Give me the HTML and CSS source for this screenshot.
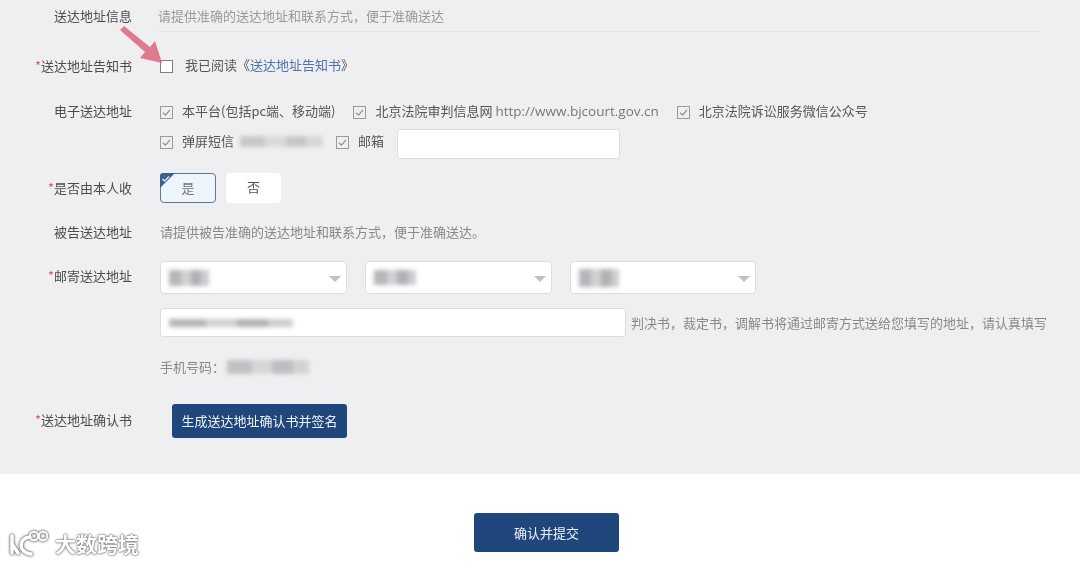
FILE: index.html
```html
<!DOCTYPE html>
<html lang="zh-CN">
<head>
<meta charset="utf-8">
<title>送达地址信息</title>
<link rel="stylesheet" href="styles.css">
</head>
<body>
<main class="panel">
  <section class="row row-head">
    <div class="label">送达地址信息</div>
    <div class="head-hint">请提供准确的送达地址和联系方式，便于准确送达</div>
  </section>

  <section class="row row-notice">
    <div class="label"><span class="req">*</span>送达地址告知书</div>
    <div class="line">
      <span class="box"></span>
      <span class="notice-text">我已阅读《<a class="link">送达地址告知书</a>》</span>
    </div>
  </section>

  <section class="row row-electronic">
    <div class="label">电子送达地址</div>
    <div class="stack">
      <div class="line line-a">
        <span class="opt"><svg class="check" viewBox="0 0 13 13"><rect x=".5" y=".5" width="12" height="12" fill="none" stroke="#9a9a9e"/><path d="M3 6.6l2.5 2.6L10 3.8" fill="none" stroke="#8a8a8e" stroke-width="1.1"/></svg>本平台(包括pc端、移动端)</span>
        <span class="opt"><svg class="check" viewBox="0 0 13 13"><rect x=".5" y=".5" width="12" height="12" fill="none" stroke="#9a9a9e"/><path d="M3 6.6l2.5 2.6L10 3.8" fill="none" stroke="#8a8a8e" stroke-width="1.1"/></svg>北京法院审判信息网 <span class="url">http://www.bjcourt.gov.cn</span></span>
        <span class="opt"><svg class="check" viewBox="0 0 13 13"><rect x=".5" y=".5" width="12" height="12" fill="none" stroke="#9a9a9e"/><path d="M3 6.6l2.5 2.6L10 3.8" fill="none" stroke="#8a8a8e" stroke-width="1.1"/></svg>北京法院诉讼服务微信公众号</span>
      </div>
      <div class="line line-b">
        <span class="opt"><svg class="check" viewBox="0 0 13 13"><rect x=".5" y=".5" width="12" height="12" fill="none" stroke="#9a9a9e"/><path d="M3 6.6l2.5 2.6L10 3.8" fill="none" stroke="#8a8a8e" stroke-width="1.1"/></svg>弹屏短信<span class="smear smear-sms"></span></span>
        <span class="opt opt-mail"><svg class="check" viewBox="0 0 13 13"><rect x=".5" y=".5" width="12" height="12" fill="none" stroke="#9a9a9e"/><path d="M3 6.6l2.5 2.6L10 3.8" fill="none" stroke="#8a8a8e" stroke-width="1.1"/></svg>邮箱</span>
        <span class="field field-mail"></span>
      </div>
    </div>
  </section>

  <section class="row row-self">
    <div class="label"><span class="req">*</span>是否由本人收</div>
    <div class="toggles">
      <span class="toggle toggle-on">
        <svg class="corner" viewBox="0 0 18 18"><path d="M0 3a3 3 0 0 1 3-3h12L0 15z" fill="#3c6092"/><path d="M2.5 6l2.2 2L9 3.6" fill="none" stroke="#dfe8f3" stroke-width="1.4"/></svg>
        是
      </span>
      <span class="toggle toggle-off">否</span>
    </div>
  </section>

  <section class="row row-defendant">
    <div class="label">被告送达地址</div>
    <div class="hint">请提供被告准确的送达地址和联系方式，便于准确送达。</div>
  </section>

  <section class="row row-mail">
    <div class="label"><span class="req">*</span>邮寄送达地址</div>
    <div class="stack">
      <div class="selects">
        <span class="select"><span class="smear smear-s1"></span><i class="caret"></i></span>
        <span class="select"><span class="smear smear-s2"></span><i class="caret"></i></span>
        <span class="select"><span class="smear smear-s3"></span><i class="caret"></i></span>
      </div>
      <div class="address">
        <span class="field field-address"><span class="smear smear-addr"></span></span>
        <span class="address-hint">判决书，裁定书，调解书将通过邮寄方式送给您填写的地址，请认真填写</span>
      </div>
      <div class="phone">手机号码：<span class="smear smear-phone"></span></div>
    </div>
  </section>

  <section class="row row-confirm">
    <div class="label"><span class="req">*</span>送达地址确认书</div>
    <button class="btn btn-make" type="button">生成送达地址确认书并签名</button>
  </section>

  <svg class="arrow" viewBox="0 0 50 44"><path d="M2 5L6 1L32 22L37 16L44 38L22 33L27 27z" fill="#d9657c" opacity=".85"/></svg>
</main>

<footer class="foot">
  <button class="btn btn-submit" type="button">确认并提交</button>
  <div class="mark">
    <svg class="mark-logo" viewBox="0 0 40 28"><g fill="none" stroke="#fff" stroke-width="3.4" stroke-linecap="round"><path d="M3 7v17"/><path d="M3 15L9 24"/><path d="M21 8C9 9 9 24 22 25"/></g><g fill="none" stroke="#fff" stroke-width="2"><circle cx="25" cy="7" r="4.2"/><circle cx="34" cy="7" r="4.2"/></g></svg>
    <span class="mark-text">大数跨境</span>
  </div>
</footer>
</body>
</html>
```

FILE: styles.css
```css
* { box-sizing: border-box; }
html, body { margin: 0; padding: 0; }
body {
  width: 1080px;
  height: 563px;
  overflow: hidden;
  background: #fff;
  color: #55555a;
  font: 13px/20px "Noto Sans CJK SC", "Noto Sans", sans-serif;
}
.panel, .foot { filter: blur(.35px); }
.panel {
  position: relative;
  height: 474px;
  background: #efeff2;
}
.row { display: flex; }
.label {
  flex: none;
  width: 132px;
  margin-right: 28px;
  text-align: right;
  color: #4c4c50;
}
.req { color: #d9566c; }
.line { display: flex; align-items: center; }
.stack { display: flex; flex-direction: column; }

.row-head { height: 32px; }
.row-head .label { line-height: 32px; }
.head-hint {
  flex: none;
  width: 882px;
  margin-left: -2px;
  height: 32px;
  line-height: 32px;
  color: #99999d;
  border-bottom: 1px solid #e6e6ea;
}

.row-notice { margin-top: 24px; height: 20px; }
.box {
  width: 13px;
  height: 13px;
  border: 1px solid #808084;
  background: #fff;
  margin-top: 1px;
}
.notice-text { margin-left: 12px; margin-top: -2px; }
.link { color: #4e74a8; }

.row-electronic { margin-top: 21px; }
.row-electronic .label { line-height: 28px; }
.line-a { height: 28px; gap: 18px; }
.line-b { height: 30px; margin-top: 4px; }
.line-b .opt { margin-bottom: 6px; }
.opt { display: inline-flex; align-items: center; white-space: pre; }
.check { flex: none; width: 13px; height: 13px; margin-right: 9px; margin-top: 2px; }
.url { color: #77777b; font-family: "Open Sans", sans-serif; font-size: 13.5px; }
.opt-mail { margin-left: 13px; }
.field {
  display: block;
  background: #fff;
  border: 1px solid #dcdce0;
  border-radius: 3px;
}
.field-mail { width: 223px; height: 30px; margin-left: 13px; }

.smear {
  display: inline-block;
  background:
    linear-gradient(90deg, #a9a9ae 0 30%, #c9c9cd 30% 55%, #a4a4a9 55% 80%, #c4c4c8 80% 100%);
  filter: blur(2px);
  opacity: .85;
}
.smear-sms { width: 83px; height: 11px; margin-left: 6px; opacity: .55; }

.row-self { margin-top: 14px; }
.row-self .label { line-height: 30px; }
.toggles { display: flex; gap: 10px; }
.toggle {
  position: relative;
  height: 30px;
  width: 56px;
  line-height: 28px;
  text-align: center;
  border-radius: 4px;
}
.toggle-on { background: #eef6fb; border: 1px solid #5b7895; color: #74747a; }
.toggle-off { background: #fff; width: 55px; color: #55555a; }
.corner { position: absolute; left: -1px; top: -1px; width: 18px; height: 18px; }

.row-defendant { margin-top: 15px; height: 28px; }
.row-defendant .label { line-height: 28px; }
.hint { line-height: 28px; color: #88888c; }

.row-mail { margin-top: 15px; }
.row-mail .label { line-height: 30px; }
.selects { display: flex; gap: 18px; }
.select {
  position: relative;
  display: flex;
  align-items: center;
  width: 187px;
  height: 33px;
  padding-left: 8px;
  background: #fff;
  border: 1px solid #dcdce0;
  border-radius: 4px;
}
.select:last-child { width: 186px; }
.caret {
  position: absolute;
  right: 5px;
  top: 14px;
  border: 6px solid transparent;
  border-top: 6px solid #c0c0c4;
  border-bottom: 0;
}
.smear-s1 { width: 40px; height: 16px; }
.smear-s2 { width: 42px; height: 15px; }
.smear-s3 { width: 40px; height: 18px; }
.address { display: flex; align-items: center; margin-top: 14px; gap: 5px; }
.field-address {
  display: flex;
  align-items: center;
  width: 466px;
  height: 29px;
  padding-left: 8px;
}
.smear-addr { width: 124px; height: 8px; }
.address-hint { color: #88888c; white-space: nowrap; }
.phone { display: flex; align-items: center; margin-top: 20px; color: #88888c; }
.smear-phone { width: 82px; height: 14px; margin-left: 2px; opacity: .65; }

.row-confirm { margin-top: 27px; }
.row-confirm .label { line-height: 32px; }
.btn {
  display: block;
  border: 0;
  border-radius: 3px;
  background: #20477c;
  color: #eef2f8;
  font: inherit;
}
.btn-make { width: 175px; height: 34px; margin-left: 12px; }

.arrow { position: absolute; left: 118px; top: 25px; width: 50px; height: 44px; filter: blur(.6px); }

.foot { position: relative; height: 89px; padding-top: 39px; }
.btn-submit { width: 145px; height: 39px; margin-left: 474px; }
.mark {
  position: absolute;
  left: 9px;
  top: 54px;
  display: flex;
  align-items: center;
  gap: 6px;
  height: 30px;
}
.mark-logo { width: 40px; height: 28px; filter: drop-shadow(0 0 1px #666) drop-shadow(0 0 1px #999); }
.mark-text {
  color: #fff;
  font-size: 21px;
  font-weight: 700;
  line-height: 30px;
  text-shadow: 0 0 2px #666, 0 0 1px #666, 0 0 3px #aaa;
}
```
